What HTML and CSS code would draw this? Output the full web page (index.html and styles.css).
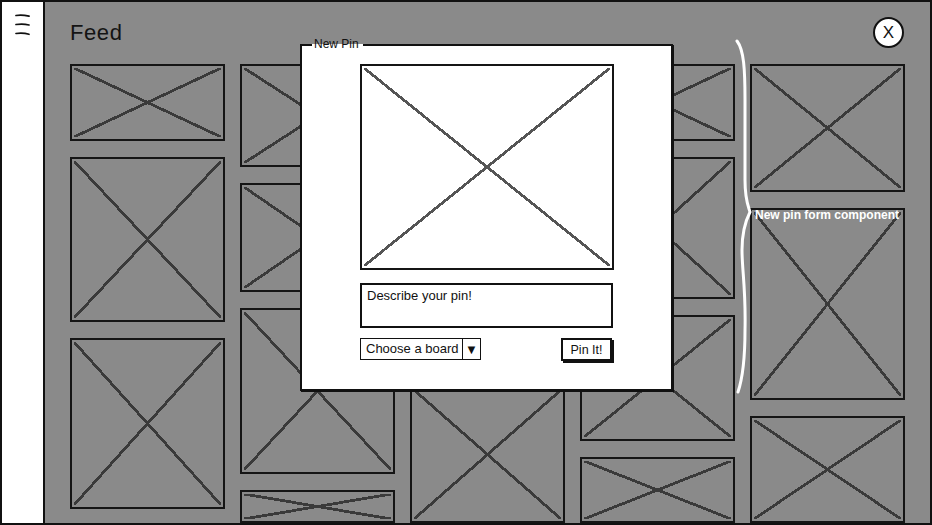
FILE: index.html
```html
<!DOCTYPE html>
<html lang="en">
<head>
  <meta charset="UTF-8">
  <meta name="viewport" content="width=device-width, initial-scale=1.0">
  <title>Feed - New Pin</title>
  <link rel="stylesheet" href="styles.css">
</head>
<body>
  <div class="frame">
    <aside class="sidebar">
      <svg class="menu-icon" width="18" height="24" viewBox="0 0 18 24">
        <path d="M2 2.5 Q8 1.5 15 3.2" />
        <path d="M2 11.5 Q9 10.4 15 12" />
        <path d="M2 20.5 Q9 19.5 15 21.3" />
      </svg>
    </aside>

    <main class="feed">
      <h1 class="feed-title">Feed</h1>
      <div class="grid">
        <div class="col">
          <div class="ph h77"></div>
          <div class="ph h165"></div>
          <div class="ph h171"></div>
        </div>
        <div class="col">
          <div class="ph h103"></div>
          <div class="ph h109"></div>
          <div class="ph h166"></div>
          <div class="ph h33"></div>
        </div>
        <div class="col">
          <div class="ph h145"></div>
          <div class="ph h145"></div>
          <div class="ph h137"></div>
        </div>
        <div class="col">
          <div class="ph h77"></div>
          <div class="ph h142"></div>
          <div class="ph h126"></div>
          <div class="ph h66"></div>
        </div>
        <div class="col">
          <div class="ph h128"></div>
          <div class="ph h192"></div>
          <div class="ph h107"></div>
        </div>
      </div>
    </main>

    <button class="close-btn">X</button>

    <section class="modal">
      <span class="modal-label">New Pin</span>
      <div class="ph ph-light pin-image"></div>
      <div class="pin-text">Describe your pin!</div>
      <div class="pin-row">
        <div class="board-select">
          <span class="board-label">Choose a board</span>
          <span class="board-arrow">&#9660;</span>
        </div>
        <button class="pin-btn">Pin It!</button>
      </div>
    </section>

    <svg class="brace" width="28" height="360" viewBox="0 0 28 360">
      <path d="M9 3 C16 12 17 32 17 62 L17 142 C17 162 20 167 22 174 C18 182 14 192 14 212 C14 232 18 252 17 292 C17 322 14 342 10 354" />
    </svg>
    <span class="note">New pin form component</span>
  </div>
</body>
</html>
```

FILE: styles.css
```css
* {
  box-sizing: border-box;
}
body {
  margin: 0;
  background: #fff;
  font-family: "Liberation Sans", Arial, sans-serif;
  color: #111;
}
.frame {
  position: relative;
  width: 932px;
  height: 525px;
  border: 2px solid #111;
  display: flex;
  overflow: hidden;
}
.sidebar {
  width: 43px;
  flex-shrink: 0;
  background: #fff;
  border-right: 2px solid #111;
  padding: 11px 0 0 12px;
}
.menu-icon path {
  fill: none;
  stroke: #111;
  stroke-width: 1.7;
  stroke-linecap: round;
}
.feed {
  flex: 1;
  background: #8a8a8a;
  padding-left: 25px;
  overflow: hidden;
}
.feed-title {
  margin: 18px 0 18px;
  font-size: 22px;
  line-height: 26px;
  font-weight: normal;
  letter-spacing: 0.6px;
  color: #141414;
}
.grid {
  display: flex;
  gap: 15px;
  align-items: flex-start;
}
.col {
  width: 155px;
  display: flex;
  flex-direction: column;
  gap: 16px;
}

/* image placeholder with the crossed diagonals */
.ph {
  border: 2px solid #151515;
  padding: 2px;
  background:
    linear-gradient(to top right, transparent calc(50% - 1.4px), #3a3a3a calc(50% - 1.4px), #3a3a3a calc(50% + 1.4px), transparent calc(50% + 1.4px)),
    linear-gradient(to bottom right, transparent calc(50% - 1.4px), #3a3a3a calc(50% - 1.4px), #3a3a3a calc(50% + 1.4px), transparent calc(50% + 1.4px)),
    #8a8a8a;
  background-origin: content-box;
  background-clip: content-box, content-box, padding-box;
  background-repeat: no-repeat;
}
.ph-light {
  background:
    linear-gradient(to top right, transparent calc(50% - 1.4px), #555 calc(50% - 1.4px), #555 calc(50% + 1.4px), transparent calc(50% + 1.4px)),
    linear-gradient(to bottom right, transparent calc(50% - 1.4px), #555 calc(50% - 1.4px), #555 calc(50% + 1.4px), transparent calc(50% + 1.4px)),
    #fff;
  background-origin: content-box;
  background-clip: content-box, content-box, padding-box;
  background-repeat: no-repeat;
}
.h33 { height: 33px; }
.h66 { height: 66px; }
.h77 { height: 77px; }
.h103 { height: 103px; }
.h107 { height: 107px; }
.h109 { height: 109px; }
.h126 { height: 126px; }
.h128 { height: 128px; }
.h137 { height: 137px; }
.h142 { height: 142px; }
.h145 { height: 145px; }
.h165 { height: 165px; }
.h166 { height: 166px; }
.h171 { height: 171px; }
.h192 { height: 192px; }

.close-btn {
  position: absolute;
  left: 871px;
  top: 15px;
  width: 31px;
  height: 31px;
  padding: 0;
  border: 2px solid #111;
  border-radius: 50%;
  background: #fff;
  font-family: "Liberation Sans", Arial, sans-serif;
  font-size: 17px;
  line-height: 26px;
  color: #111;
}

/* new pin dialog */
.modal {
  position: absolute;
  left: 298px;
  top: 42px;
  width: 373px;
  height: 347px;
  background: #fff;
  border: 2px solid #111;
  box-shadow: 1px 1px 0 #111;
  padding: 18px 0 0 58px;
}
.modal-label {
  position: absolute;
  left: 10px;
  top: -9px;
  padding: 0 4px 0 2px;
  font-size: 12px;
  line-height: 14px;
  background: linear-gradient(#8a8a8a 7px, #fff 7px);
}
.pin-image {
  width: 254px;
  height: 206px;
}
.pin-text {
  margin-top: 13px;
  width: 253px;
  height: 45px;
  border: 2px solid #111;
  padding: 3px 5px;
  font-size: 13px;
  line-height: 16px;
}
.pin-row {
  margin-top: 10px;
  width: 254px;
  display: flex;
  justify-content: space-between;
  align-items: flex-start;
}
.board-select {
  display: flex;
  height: 22px;
  width: 121px;
  border: 1.5px solid #111;
  font-size: 13px;
  line-height: 19px;
}
.board-label {
  flex: 1;
  padding-left: 5px;
  border-right: 1.5px solid #111;
}
.board-arrow {
  width: 17px;
  text-align: center;
  font-size: 13px;
  line-height: 21px;
}
.pin-btn {
  width: 51px;
  height: 23px;
  margin-right: 2px;
  padding: 0;
  border: 2px solid #111;
  box-shadow: 2px 2px 0 #111;
  background: #fff;
  font-family: "Liberation Sans", Arial, sans-serif;
  font-size: 12.5px;
  color: #111;
}

/* annotation */
.brace {
  position: absolute;
  left: 726px;
  top: 36px;
}
.brace path {
  fill: none;
  stroke: #fff;
  stroke-width: 3;
  stroke-linecap: round;
}
.note {
  position: absolute;
  left: 753px;
  top: 206px;
  font-size: 12px;
  line-height: 14px;
  font-weight: bold;
  color: #fff;
}
```
